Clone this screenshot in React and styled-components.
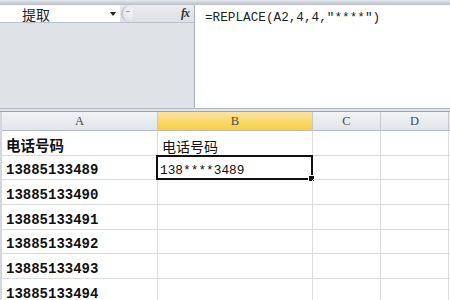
import React from "react";
import styled, { createGlobalStyle } from "styled-components";

const GlobalStyle = createGlobalStyle`
  html, body {
    margin: 0;
    padding: 0;
    background: #ffffff;
    overflow: hidden;
  }
  * {
    box-sizing: border-box;
  }
`;

const Page = styled.div`
  width: 450px;
  height: 300px;
  overflow: hidden;
  display: flex;
  flex-direction: column;
  background: #ffffff;
  & > * {
    flex-shrink: 0;
  }
`;

const TopEdge = styled.div`
  height: 5px;
  background: linear-gradient(#e6e9ed, #c9ced6 60%, #b9bfc8);
`;

/* 수식 입력줄 영역 */
const FormulaBar = styled.div`
  height: 103px;
  display: flex;
`;

const LeftPane = styled.div`
  width: 195px;
  display: flex;
  flex-direction: column;
  background: #dfe2e7;
  border-right: 1px solid #a9b0b9;
`;

const NameRow = styled.div`
  height: 18px;
  display: flex;
  align-items: center;
  border-bottom: 1px solid #bcc2ca;
`;

const NameBox = styled.div`
  width: 120px;
  height: 100%;
  background: #ffffff;
  display: flex;
  align-items: center;
  padding-left: 22px;
  font-family: "Noto Sans CJK SC", sans-serif;
  font-size: 14px;
  color: #222;
  position: relative;
`;

const DropArrow = styled.span`
  position: absolute;
  left: 110px;
  top: 7px;
  width: 0;
  height: 0;
  border-left: 3px solid transparent;
  border-right: 3px solid transparent;
  border-top: 4px solid #222;
`;

const FxZone = styled.div`
  flex: 1;
  height: 100%;
  display: flex;
  align-items: center;
  justify-content: space-between;
  padding-right: 5px;
  background: linear-gradient(#e9ebef, #dde0e5);
`;

const Knob = styled.span`
  width: 12px;
  height: 17px;
  margin-left: 1px;
  border-radius: 9px 0 0 9px;
  border-left: 2px solid #c3c8cf;
  background: radial-gradient(circle at 70% 40%, #f4f5f7, #dadde2);
  display: flex;
  align-items: center;
  justify-content: center;
  &::after {
    content: "";
    width: 4px;
    height: 1px;
    background: #9aa0a8;
    margin-top: -4px;
  }
`;

const FxMark = styled.span`
  font-family: "Liberation Serif", serif;
  font-style: italic;
  font-weight: bold;
  font-size: 12px;
  color: #333;
  letter-spacing: -1px;
`;

const LeftFill = styled.div`
  flex: 1;
`;

const FormulaInput = styled.div`
  flex: 1;
  background: #ffffff;
  padding: 5px 0 0 10px;
  font-family: "Liberation Mono", monospace;
  font-size: 12.7px;
  color: #222;
  white-space: nowrap;
`;

const Divider = styled.div`
  height: 4px;
  background: #dfe2e7;
  border-top: 1px solid #b2b8c1;
  border-bottom: 1px solid #9da4ae;
`;

/* 시트 그리드 */
const Sheet = styled.div`
  display: grid;
  grid-template-columns: 2px 156px 155px 68px 68px 1fr;
  grid-template-rows: 19px repeat(7, 24.7px);
`;

const Gutter = styled.div`
  background: #d3d7dd;
`;

const ColHead = styled.div`
  display: flex;
  align-items: center;
  justify-content: center;
  padding-top: 1px;
  font-family: "Liberation Serif", serif;
  font-size: 12.5px;
  color: #4a4a4a;
  border-right: 1px solid #c4c9d0;
  border-bottom: 1px solid #b4bac3;
  background: ${(p) =>
    p.$active
      ? "linear-gradient(#fbe59a, #f9d867 55%, #f6cd4e)"
      : "linear-gradient(#f1f3f5, #e2e5ea)"};
`;

const Cell = styled.div`
  position: relative;
  display: flex;
  align-items: flex-end;
  padding: 0 0 2px ${(p) => (p.$pad ? p.$pad : 4)}px;
  border-right: 1px solid #dadcdf;
  border-bottom: 1px solid #dadcdf;
  white-space: nowrap;
  color: #111;
  font-family: ${(p) =>
    p.$cjk ? '"Noto Sans CJK SC", sans-serif' : '"Liberation Mono", monospace'};
  font-size: ${(p) => p.$size || 14}px;
  font-weight: ${(p) => (p.$bold ? 700 : 400)};
  line-height: 1;
`;

const Selection = styled.div`
  position: absolute;
  left: -2px;
  top: -1px;
  right: -1px;
  bottom: -1px;
  border: 2px solid #111;
  pointer-events: none;
  &::after {
    content: "";
    position: absolute;
    right: -4px;
    bottom: -4px;
    width: 5px;
    height: 5px;
    background: #111;
    border: 1px solid #fff;
  }
`;

const phones = [
  "13885133490",
  "13885133491",
  "13885133492",
  "13885133493",
  "13885133494",
];

export default function App() {
  return (
    <Page>
      <GlobalStyle />
      <TopEdge />
      <FormulaBar>
        <LeftPane>
          <NameRow>
            <NameBox>
              提取
              <DropArrow />
            </NameBox>
            <FxZone>
              <Knob />
              <FxMark>fx</FxMark>
            </FxZone>
          </NameRow>
          <LeftFill />
        </LeftPane>
        <FormulaInput>=REPLACE(A2,4,4,"****")</FormulaInput>
      </FormulaBar>
      <Divider />
      <Sheet>
        <Gutter />
        <ColHead>A</ColHead>
        <ColHead $active>B</ColHead>
        <ColHead>C</ColHead>
        <ColHead>D</ColHead>
        <ColHead />

        <Gutter />
        <Cell $cjk $bold $size={14.5}>电话号码</Cell>
        <Cell $cjk $size={14}>电话号码</Cell>
        <Cell />
        <Cell />
        <Cell />

        <Gutter />
        <Cell $bold>13885133489</Cell>
        <Cell $size={12.8} $pad={2}>
          138****3489
          <Selection />
        </Cell>
        <Cell />
        <Cell />
        <Cell />

        {phones.map((n) => (
          <React.Fragment key={n}>
            <Gutter />
            <Cell $bold>{n}</Cell>
            <Cell />
            <Cell />
            <Cell />
            <Cell />
          </React.Fragment>
        ))}
      </Sheet>
    </Page>
  );
}
